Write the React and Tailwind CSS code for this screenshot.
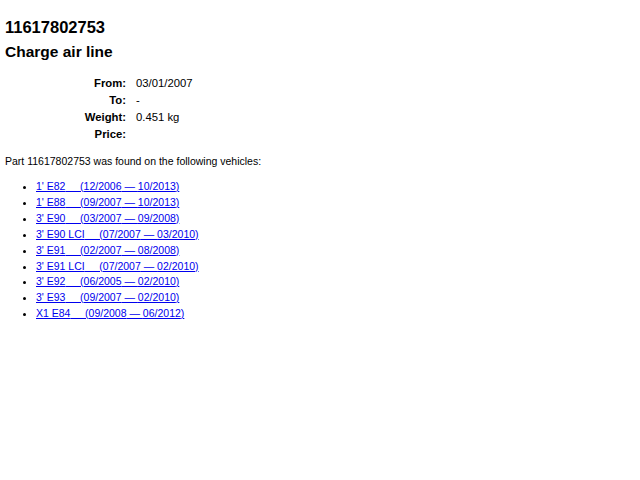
const part = {
  number: "11617802753",
  name: "Charge air line",
  from: "03/01/2007",
  to: "-",
  weight: "0.451 kg",
  price: "",
}

const vehicles = [
  ["1' E82", "12/2006", "10/2013"],
  ["1' E88", "09/2007", "10/2013"],
  ["3' E90", "03/2007", "09/2008"],
  ["3' E90 LCI", "07/2007", "03/2010"],
  ["3' E91", "02/2007", "08/2008"],
  ["3' E91 LCI", "07/2007", "02/2010"],
  ["3' E92", "06/2005", "02/2010"],
  ["3' E93", "09/2007", "02/2010"],
  ["X1 E84", "09/2008", "06/2012"],
]

export default function App() {
  const rows = [
    ["From:", part.from],
    ["To:", part.to],
    ["Weight:", part.weight],
    ["Price:", part.price],
  ]

  return (
    <div className="min-h-[480px] w-[640px] bg-white px-[5px] pt-[16px] text-black font-['Liberation_Sans',Arial,sans-serif]">
      <h1 className="text-[16.5px] leading-[22px] font-bold">{part.number}</h1>
      <h2 className="mt-[3px] text-[15.5px] leading-[22px] font-bold">{part.name}</h2>

      <div className="mt-[12px] grid grid-cols-[121px_1fr] gap-x-[10px] text-[11.3px] leading-[17px]">
        {rows.map(([label, value]) => (
          <div key={label} className="contents">
            <div className="text-right font-bold">{label}</div>
            <div className="min-h-[17px]">{value}</div>
          </div>
        ))}
      </div>

      <p className="mt-[10px] text-[10.5px] leading-[17px]">
        Part {part.number} was found on the following vehicles:
      </p>

      <ul className="mt-[9px] list-disc pl-[31px] text-[10.5px] leading-[15.9px]">
        {vehicles.map(([model, start, end]) => (
          <li key={model}>
            <a href="#" className="text-[#0000ee] underline">
              {model}&nbsp;&nbsp;&nbsp;&nbsp;&nbsp;({start} — {end})
            </a>
          </li>
        ))}
      </ul>
    </div>
  )
}
